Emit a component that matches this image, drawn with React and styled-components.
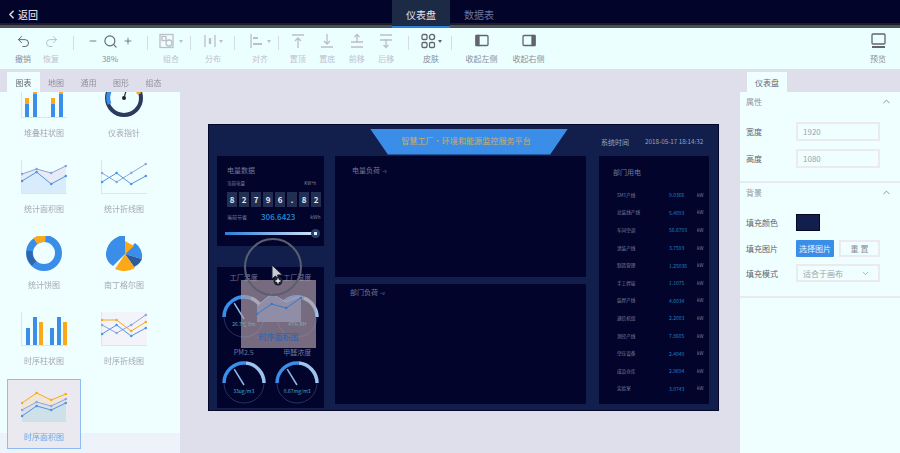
import React from "react";
import styled, { createGlobalStyle } from "styled-components";
import { Undo2, Redo2, Minus, Search, Plus, ChevronLeft, ChevronUp, ChevronDown } from "lucide-react";

const Global = createGlobalStyle`
  html, body { margin: 0; padding: 0; width: 900px; height: 453px; overflow: hidden; background: #dfdfeb; }
  * { box-sizing: border-box; }
  #root { font-family: "Noto Sans CJK SC", "Noto Sans", sans-serif; }
`;

const Page = styled.div`width:900px;height:453px;display:flex;flex-direction:column;overflow:hidden;filter:blur(.4px);`;
const TopBar = styled.header`height:28px;flex:none;background:#02042a;box-shadow:inset 0 -3px #4a4e5e,inset 0 -5px #1c1c22;display:flex;`;
const Back = styled.div`display:flex;align-items:center;color:#d8d8e0;font-size:10px;font-weight:500;width:392px;padding-left:5px;padding-top:3px;padding-bottom:2px;`;
const TopTab = styled.div`width:58px;height:${p=>p.$on?28:25}px;display:flex;align-items:center;justify-content:center;font-size:10px;padding-top:${p=>p.$on?2:4}px;
  color:${p=>p.$on?"#e2e4ec":"#6f7498"};background:${p=>p.$on?"#1d2a46":"transparent"};border-bottom:${p=>p.$on?"2px solid #2f7fd6":"none"};`;
const Toolbar = styled.div`height:41px;flex:none;background:#ebffff;display:flex;align-items:flex-start;padding-left:9px;`;
const Tool = styled.div`width:${p=>p.$w}px;flex:none;height:41px;display:flex;flex-direction:column;align-items:center;padding-top:4px;
  color:${p=>p.$off?"#bcbec9":"#62656f"};`;
const ToolIcon = styled.div`height:18px;display:flex;align-items:center;gap:${p=>p.$g||2}px;`;
const ToolText = styled.div`font-size:8px;line-height:12px;margin-top:3px;color:${p=>p.$off?"#c0c1cb":"#8c8e98"};white-space:nowrap;`;
const Sep = styled.div`width:1px;height:14px;flex:none;background:#d5dde2;margin:8px ${p=>p.$r}px 0 ${p=>p.$l}px;`;
const Spacer = styled.div`flex:1;`;
const Caret = styled.span`width:0;height:0;border-left:2.5px solid transparent;border-right:2.5px solid transparent;border-top:3px solid currentColor;`;

const Body = styled.div`flex:1;display:flex;min-height:0;`;
const Side = styled.aside`width:${p=>p.$w}px;flex:none;display:flex;flex-direction:column;padding-top:3px;`;
const TabRow = styled.div`height:20px;flex:none;display:flex;padding-left:${p=>p.$p}px;`;
const PanelTab = styled.div`width:${p=>p.$w}px;height:20px;display:flex;align-items:center;justify-content:center;font-size:8px;
  color:${p=>p.$on?"#666872":"#8f909c"};background:${p=>p.$on?"#efffff":"transparent"};`;
const PanelBody = styled.div`flex:1;background:${p=>p.$fade?"linear-gradient(#efffff 0 341px,#edf2fb 341px)":"#efffff"};overflow:hidden;`;
const ChartGrid = styled.div`margin-top:-17px;padding-left:7px;display:grid;grid-template-columns:74px 74px;column-gap:6px;row-gap:6px;`;
const ChartCell = styled.div`height:70px;display:flex;flex-direction:column;align-items:center;padding-top:${p=>p.$on?8:9}px;
  background:${p=>p.$on?"#e9e9ef":"transparent"};border:${p=>p.$on?"1px solid #8dbdf0":"none"};`;
const ChartLabel = styled.div`font-size:8px;line-height:12px;margin-top:8px;color:${p=>p.$on?"#6ca6e8":"#a6a8b0"};`;

const Stage = styled.main`flex:1;display:flex;align-items:flex-start;padding:55px 0 0 28px;`;
const Dash = styled.div`width:511px;height:287px;background:#121f4c;border:1px solid #040728;position:relative;padding:3px 8px 0;`;
const DashHead = styled.div`height:27px;display:flex;align-items:center;`;
const Title = styled.div`width:198px;height:26px;margin-left:153px;background:#3a8ee8;clip-path:polygon(0 0,100% 0,91% 100%,9% 100%);
  display:flex;align-items:center;justify-content:center;font-size:8px;color:#d8a860;letter-spacing:.1px;padding:0 6px 2px 0;white-space:nowrap;`;
const SysTime = styled.div`margin-left:33px;font-size:7px;color:#9ea4bc;`;
const DateText = styled.div`margin-left:16px;font-size:6.3px;color:#9ea4bc;white-space:nowrap;`;
const DashGrid = styled.div`display:grid;grid-template-columns:107px 251px 112px;column-gap:11px;margin-top:1px;`;
const Col = styled.div`display:flex;flex-direction:column;gap:${p=>p.$g}px;`;
const Card = styled.section`height:${p=>p.$h}px;background:#03042b;border-radius:1px;padding:${p=>p.$pad||"0"};margin-left:${p=>p.$ml||0}px;`;
const CardTitle = styled.div`font-size:7px;line-height:10px;color:#6f7798;white-space:nowrap;`;
const TitleMark = styled.span`font-size:5px;`;
const Tiny = styled.div`display:flex;justify-content:space-between;font-size:4.5px;line-height:8px;color:#7e86a4;padding-right:8px;margin-top:4px;`;
const Digits = styled.div`display:flex;gap:2px;margin-top:5px;`;
const Digit = styled.div`width:10px;height:15px;background:#232f52;color:#e8eaf0;font-size:8px;font-weight:700;display:flex;align-items:center;justify-content:center;`;
const Saved = styled.div`display:flex;align-items:center;margin-top:4px;font-size:5px;color:#7e86a4;`;
const SavedValue = styled.div`color:#1f8fd8;font-size:8px;margin:0 15px 0 14px;font-weight:500;`;
const Track = styled.div`height:3px;margin-top:10px;margin-left:-2px;width:91px;background:linear-gradient(90deg,#2a7fd8,#d5e8fb);position:relative;`;
const Knob = styled.div`position:absolute;right:-4px;top:-3px;width:9px;height:9px;border-radius:50%;background:radial-gradient(circle,#e8f2ff 0 25%,#25406f 30%);`;
const GaugeGrid = styled.div`display:grid;grid-template-columns:1fr 1fr;grid-template-rows:75px 60px;padding-top:5px;`;
const GaugeCell = styled.div`display:flex;flex-direction:column;align-items:center;`;
const GaugeName = styled.div`font-size:7px;line-height:10px;color:#6f7798;`;
const GaugeWrap = styled.div`position:relative;width:50px;height:46px;margin-top:${p=>p.$m}px;`;
const GaugeText = styled.div`position:absolute;left:0;right:0;top:${p=>p.$t}px;text-align:center;font-size:5px;color:#40b0d0;white-space:nowrap;`;
const UseRows = styled.div`margin-top:9px;display:flex;flex-direction:column;`;
const UseRow = styled.div`height:17.6px;display:grid;grid-template-columns:52px 28px auto;align-items:center;padding-left:4px;font-size:4.6px;color:#777f9e;white-space:nowrap;`;
const UseVal = styled.span`color:#1c82c4;font-size:5px;`;

const Ghost = styled.div`position:absolute;left:32px;top:155px;width:75px;height:68px;background:rgba(176,158,168,.68);display:flex;flex-direction:column;align-items:center;padding-top:8px;`;
const GhostText = styled.div`font-size:8px;font-weight:500;margin-top:8px;color:#2b67b5;`;
const Ring = styled.div`position:absolute;left:35px;top:113px;width:58px;height:58px;border-radius:50%;border:2px solid #5a5f70;`;
const Pointer = styled.svg`position:absolute;left:61px;top:139px;`;

const PropTitle = styled.div`height:${p=>p.$h}px;display:flex;justify-content:space-between;align-items:flex-start;padding:4px 8px 0 6px;font-size:8px;color:#92949e;line-height:12px;`;
const PropRow = styled.div`height:${p=>p.$h}px;display:flex;align-items:center;padding-left:6px;font-size:8px;color:#5f616b;`;
const PropLabel = styled.div`width:50px;flex:none;`;
const Input = styled.div`width:84px;height:${p=>p.$h||19}px;border:2px solid #eceaee;display:flex;align-items:center;justify-content:space-between;padding:0 8px 0 5px;font-size:8px;color:#a0a2ac;`;
const Swatch = styled.div`width:24px;height:17px;background:#121f4c;border:1px solid #050823;`;
const PrimaryBtn = styled.div`width:38px;height:17px;background:#3a8ee8;color:#eaf4ff;font-size:8px;display:flex;align-items:center;justify-content:center;white-space:nowrap;border-radius:1px;`;
const GhostBtn = styled.div`width:41px;height:17px;margin-left:5px;border:2px solid #eceaee;color:#8b8d97;font-size:8px;display:flex;align-items:center;justify-content:center;`;
const Divider = styled.div`height:2px;background:#e8eaef;`;
const Gap = styled.div`height:${p=>p.$h}px;`;

const S = { fill:"none", stroke:"currentColor", strokeWidth:1.3 };
const Ico = ({children,w=16}) => <svg width={w} height="16" viewBox={`0 0 ${w} 16`} {...S}>{children}</svg>;
const icons = {
  group:<Ico w={18}><rect x="1" y="1.5" width="13" height="13"/><rect x="3" y="3.5" width="4" height="4"/><circle cx="10" cy="10" r="3"/></Ico>,
  dist:<Ico w={14}><path d="M2 2v12M12 2v12"/><path d="M7 5v6" strokeWidth="2.4"/></Ico>,
  align:<Ico w={16}><path d="M2 1v14"/><path d="M4 5h5M4 11h9" strokeWidth="2.2"/></Ico>,
  top:<Ico><path d="M2 2h12M8 15V5M5 8l3-3 3 3"/></Ico>,
  bottom:<Ico><path d="M2 14h12M8 1v10M5 8l3 3 3-3"/></Ico>,
  fwd:<Ico><path d="M2 9h12M2 14h12M8 1v9M5.5 4L8 1.5 10.5 4"/></Ico>,
  back:<Ico><path d="M2 2h12M2 7h12M8 6v9M5.5 12L8 14.5 10.5 12"/></Ico>,
  skin:<Ico w={15}><rect x="1" y="1.5" width="5" height="5" rx="1.3"/><circle cx="11" cy="4" r="2.6"/><rect x="1" y="9.5" width="5" height="5" rx="1.3"/><rect x="8.5" y="9.5" width="5" height="5" rx="1.3"/></Ico>,
  left:<Ico w={14}><rect x="1" y="2.5" width="12" height="10" rx="1"/><rect x="1" y="2.5" width="3" height="10" fill="currentColor"/></Ico>,
  right:<Ico w={14}><rect x="1" y="2.5" width="12" height="10" rx="1"/><rect x="10" y="2.5" width="3" height="10" fill="currentColor"/></Ico>,
  preview:<Ico w={15}><rect x="1" y="1" width="13" height="10" rx="1"/><path d="M1 14h13" strokeWidth="2"/></Ico>,
};

const Frame = ({bg}) => <>{bg && <rect x="0" y="0" width="46" height="34" fill={bg}/>}<path d="M.5 0v33.5H46" fill="none" stroke="#e2e2ea"/></>;
const Line = ({d,c,dots,w=1}) => <><polyline points={d.map(p=>p.join(",")).join(" ")} fill="none" stroke={c} strokeWidth={w}/>{dots&&d.map((p,i)=><circle key={i} cx={p[0]} cy={p[1]} r="1.3" fill={c}/>)}</>;
const pts = (...a) => a.map((y,i)=>[1+i*14.6,y]);
const Thumb = ({children}) => <svg width="46" height="35" viewBox="0 0 46 35">{children}</svg>;
const B="#3a8ee8",O="#fba918",D="#2b5d9e";
const charts = {
  stack:<Thumb><Frame/>{[[5,16],[13,26],[31,16],[39,26]].map(([x,h],i)=><g key={i}><rect x={x-1} y={33-h+2} width="4" height={h-2} fill={B}/><rect x={x-1} y={33-h-3} width="4" height="6" fill={O}/></g>)}</Thumb>,
  gauge:<Thumb><circle cx="23" cy="14" r="17" fill="none" stroke="#2c3a5c" strokeWidth="4"/><path d="M8.5 20A16 16 0 0 1 17 -1" fill="none" stroke={B} strokeWidth="4"/><path d="M29 -1A16 16 0 0 1 38 10" fill="none" stroke={O} strokeWidth="4"/><path d="M23 14L27 0" stroke="#333" strokeWidth="1.2"/><circle cx="23" cy="14" r="2" fill="#223"/></Thumb>,
  area:<Thumb><Frame/><polygon points="1,14 15,9 30,13 45,6 45,33 1,33" fill="#e8ebf6"/><polygon points="1,21 15,12 30,24 45,16 45,33 1,33" fill="#d9ecfb"/><Line d={pts(14,9,13,6)} c="#8aa3d8" dots/><Line d={pts(21,12,24,16)} c="#4d94e6" dots/></Thumb>,
  line:<Thumb><Frame/><Line d={pts(13,22,13,4)} c="#8ea6da" dots/><Line d={pts(22,13,24,16)} c="#4d94e6" dots/></Thumb>,
  pie:<Thumb><circle cx="23" cy="17" r="14.5" fill="none" stroke={B} strokeWidth="7"/><path d="M14.5 5.3A14.5 14.5 0 0 1 24.5 2.6" fill="none" stroke={O} strokeWidth="7"/><path d="M8.7 15A14.5 14.5 0 0 0 13 27.5" fill="none" stroke={D} strokeWidth="6" opacity=".8"/></Thumb>,
  rose:<Thumb><path d="M24 18L24 -1A20 20 0 0 0 5 20A15 15 0 0 0 12 30Z" fill={B}/><path d="M24 18L34 7 A16 16 0 0 1 41 23Z" fill={B}/><path d="M24 18L41 23A16 16 0 0 1 33 31Z" fill={D}/><path d="M24 18L34 32A22 22 0 0 1 14 33Z" fill={O}/><path d="M24 18L24 5 L33 10Z" fill={O}/></Thumb>,
  bars:<Thumb><Frame/>{[[5,17],[12,28],[18,23],[29,17],[36,28],[42,23]].map(([x,h],i)=><rect key={i} x={x} y={33-h} width="4" height={h} fill={(i%3)==2?O:B}/>)}</Thumb>,
  tline:<Thumb><Frame bg="#f2f4fa"/><Line d={pts(8,8,19,10)} c={O} dots/><Line d={pts(13,21,13,3)} c="#8ea6da" dots/><Line d={pts(22,13,24,16)} c="#4d94e6" dots/></Thumb>,
  tarea:<Thumb><polygon points="1,15 15,5 30,12 45,6 45,34 1,34" fill="#f0e6d8"/><polygon points="1,22 15,14 30,18 45,11 45,34 1,34" fill="#dcdfec"/><polygon points="1,28 15,18 30,22 45,15 45,34 1,34" fill="#cfe1e8"/><Line d={pts(15,5,12,6)} c={O} dots/><Line d={pts(22,14,18,11)} c="#8ea6da" dots/><Line d={pts(28,18,22,15)} c="#4d94e6" dots/></Thumb>,
};
const list = [["堆叠柱状图","stack"],["仪表指针","gauge"],["统计面积图","area"],["统计折线图","line"],["统计饼图","pie"],["南丁格尔图","rose"],["时序柱状图","bars"],["时序折线图","tline"],["时序面积图","tarea",true]];

const Gauge = ({a,text,t,m}) => {
  const r=20,cx=25,cy=23;
  const pt=(deg,rad=r)=>{const d=deg*Math.PI/180;return [cx+rad*Math.cos(d),cy-rad*Math.sin(d)].map(n=>n.toFixed(1)).join(" ")};
  return <GaugeWrap $m={m}>
    <svg width="50" height="46" viewBox="0 0 50 46">
      <path d={`M${pt(180)}A${r} ${r} 0 0 1 ${pt(a)}`} fill="none" stroke="#3a8ee8" strokeWidth="3.5"/>
      <path d={`M${pt(a)}A${r} ${r} 0 0 1 ${pt(0)}`} fill="none" stroke="#9cc4ec" strokeWidth="3.5"/>
      <path d={`M${pt(0)}A${r} ${r} 0 0 1 ${pt(180)}`} fill="none" stroke="#2a3f72" strokeWidth=".8"/>
      <path d={`M${cx} ${cy+2}L${pt(125,17)}`} stroke="#8fb8e8" strokeWidth="1.5"/>
    </svg>
    <GaugeText $t={t}>{text}</GaugeText>
  </GaugeWrap>;
};
const usage = [["SMT产线","9.0366"],["总装线产线","5.4093"],["车间空调","56.6703"],["涂装产线","3.7593"],["制造管理","1.25036"],["手工焊接","1.1075"],["装焊产线","4.6034"],["通信机组","2.2083"],["测控产线","7.8605"],["空压设备","2.4049"],["成品仓库","2.9694"],["实验室","3.0743"]];

export default function App(){
  return <><Global/><Page>
    <TopBar>
      <Back><ChevronLeft size={13} strokeWidth={3}/>返回</Back>
      <TopTab $on>仪表盘</TopTab><TopTab>数据表</TopTab>
    </TopBar>
    <Toolbar>
      <Tool $w={28}><ToolIcon><Undo2 size={15} strokeWidth={1.6}/></ToolIcon><ToolText>撤销</ToolText></Tool>
      <Tool $w={28} $off><ToolIcon><Redo2 size={15} strokeWidth={1.6}/></ToolIcon><ToolText $off>恢复</ToolText></Tool>
      <Sep $l={8} $r={8}/>
      <Tool $w={56}><ToolIcon $g={5}><Minus size={10} strokeWidth={2}/><Search size={15} strokeWidth={1.8}/><Plus size={10} strokeWidth={2}/></ToolIcon><ToolText>38%</ToolText></Tool>
      <Sep $l={9} $r={8}/>
      <Tool $w={30} $off><ToolIcon>{icons.group}<Caret/></ToolIcon><ToolText $off>组合</ToolText></Tool>
      <Sep $l={4} $r={6}/>
      <Tool $w={32} $off><ToolIcon>{icons.dist}<Caret/></ToolIcon><ToolText $off>分布</ToolText></Tool>
      <Sep $l={5} $r={8}/>
      <Tool $w={34} $off><ToolIcon>{icons.align}<Caret/></ToolIcon><ToolText $off>对齐</ToolText></Tool>
      <Sep $l={1} $r={4}/>
      <Tool $w={29.5} $off><ToolIcon>{icons.top}</ToolIcon><ToolText $off>置顶</ToolText></Tool>
      <Tool $w={29.5} $off><ToolIcon>{icons.bottom}</ToolIcon><ToolText $off>置底</ToolText></Tool>
      <Tool $w={29.5} $off><ToolIcon>{icons.fwd}</ToolIcon><ToolText $off>前移</ToolText></Tool>
      <Tool $w={29.5} $off><ToolIcon>{icons.back}</ToolIcon><ToolText $off>后移</ToolText></Tool>
      <Sep $l={7} $r={7}/>
      <Tool $w={30}><ToolIcon>{icons.skin}<Caret/></ToolIcon><ToolText>皮肤</ToolText></Tool>
      <Sep $l={5} $r={6}/>
      <Tool $w={47}><ToolIcon>{icons.left}</ToolIcon><ToolText>收起左侧</ToolText></Tool>
      <Tool $w={47}><ToolIcon>{icons.right}</ToolIcon><ToolText>收起右侧</ToolText></Tool>
      <Spacer/>
      <Tool $w={44}><ToolIcon>{icons.preview}</ToolIcon><ToolText>预览</ToolText></Tool>
    </Toolbar>
    <Body>
      <Side $w={180}>
        <TabRow $p={7}>
          <PanelTab $w={33} $on>图表</PanelTab><PanelTab $w={32}>地图</PanelTab><PanelTab $w={33}>通用</PanelTab><PanelTab $w={32}>图形</PanelTab><PanelTab $w={33}>组态</PanelTab>
        </TabRow>
        <PanelBody $fade>
          <ChartGrid>
            {list.map(([n,k,on])=><ChartCell key={n} $on={on}>{charts[k]}<ChartLabel $on={on}>{n}</ChartLabel></ChartCell>)}
          </ChartGrid>
        </PanelBody>
      </Side>
      <Stage>
        <Dash>
          <DashHead><Title>智慧工厂•环境和能源监控服务平台</Title><SysTime>系统时间</SysTime><DateText>2018-05-17 18:14:32</DateText></DashHead>
          <DashGrid>
            <Col $g={21}>
              <Card $h={90} $pad="9px 0 0 10px">
                <CardTitle>电量数据</CardTitle>
                <Tiny><span>当前电量</span><span>KW*h</span></Tiny>
                <Digits>{[..."82796.82"].map((d,i)=><Digit key={i}>{d}</Digit>)}</Digits>
                <Saved>当前节省<SavedValue>306.6423</SavedValue>kWh</Saved>
                <Track><Knob/></Track>
              </Card>
              <Card $h={141}>
                <GaugeGrid>
                  <GaugeCell><GaugeName>工厂温度</GaugeName><Gauge a={70} text="26.7℃ 8m" t={26} m={12}/></GaugeCell>
                  <GaugeCell><GaugeName>工厂湿度</GaugeName><Gauge a={70} text="47% RH" t={26} m={12}/></GaugeCell>
                  <GaugeCell><GaugeName>PM2.5</GaugeName><Gauge a={85} text="33ug/m3" t={27} m={3}/></GaugeCell>
                  <GaugeCell><GaugeName>甲醛浓度</GaugeName><Gauge a={85} text="0.67mg/m3" t={27} m={3}/></GaugeCell>
                </GaugeGrid>
              </Card>
            </Col>
            <Col $g={7}>
              <Card $h={121} $pad="9px 0 0 17px"><CardTitle>电量负荷 <TitleMark>~v</TitleMark></CardTitle></Card>
              <Card $h={120} $pad="3px 0 0 15px"><CardTitle>部门负荷 <TitleMark>~v</TitleMark></CardTitle></Card>
            </Col>
            <Card $h={248} $pad="11px 0 0 14px" $ml={2}>
              <CardTitle>部门用电</CardTitle>
              <UseRows>{usage.map(([n,v])=><UseRow key={n}><span>{n}</span><UseVal>{v}</UseVal><span>kW</span></UseRow>)}</UseRows>
            </Card>
          </DashGrid>
          <Ghost>
            <Thumb><polygon points="1,18 15,6 30,14 45,8 45,34 1,34" fill="#8f8ea6"/><Line d={pts(18,6,14,8)} c="#a6a6c0"/><Line d={pts(26,16,20,10)} c="#3a78c8" dots/></Thumb>
            <GhostText>时序面积图</GhostText>
          </Ghost>
          <Ring/>
          <Pointer width="20" height="30" viewBox="0 0 20 30">
            <path d="M2 1v14l3.5-3 3 6 2-1-3-6h5Z" fill="#c9ccd8" stroke="#1a1c2c"/>
            <circle cx="8" cy="17" r="4.5" fill="#1c2030"/><path d="M5.5 17h5M8 14.5v5" stroke="#fff" strokeWidth="1.3"/>
          </Pointer>
        </Dash>
      </Stage>
      <Side $w={160}>
        <TabRow $p={7}><PanelTab $w={40} $on>仪表盘</PanelTab></TabRow>
        <PanelBody>
          <PropTitle $h={26}>属性<ChevronUp size={11} color="#888"/></PropTitle>
          <PropRow $h={27}><PropLabel>宽度</PropLabel><Input>1920</Input></PropRow>
          <PropRow $h={27}><PropLabel>高度</PropLabel><Input>1080</Input></PropRow>
          <Gap $h={9}/>
          <Divider/>
          <PropTitle $h={26}>背景<ChevronUp size={11} color="#888"/></PropTitle>
          <PropRow $h={26}><PropLabel>填充颜色</PropLabel><Swatch/></PropRow>
          <PropRow $h={26}><PropLabel>填充图片</PropLabel><PrimaryBtn>选择图片</PrimaryBtn><GhostBtn>重 置</GhostBtn></PropRow>
          <PropRow $h={24}><PropLabel>填充模式</PropLabel><Input $h={18}>适合于画布<ChevronDown size={9} color="#999"/></Input></PropRow>
          <Gap $h={11}/>
          <Divider/>
        </PanelBody>
      </Side>
    </Body>
  </Page></>;
}
